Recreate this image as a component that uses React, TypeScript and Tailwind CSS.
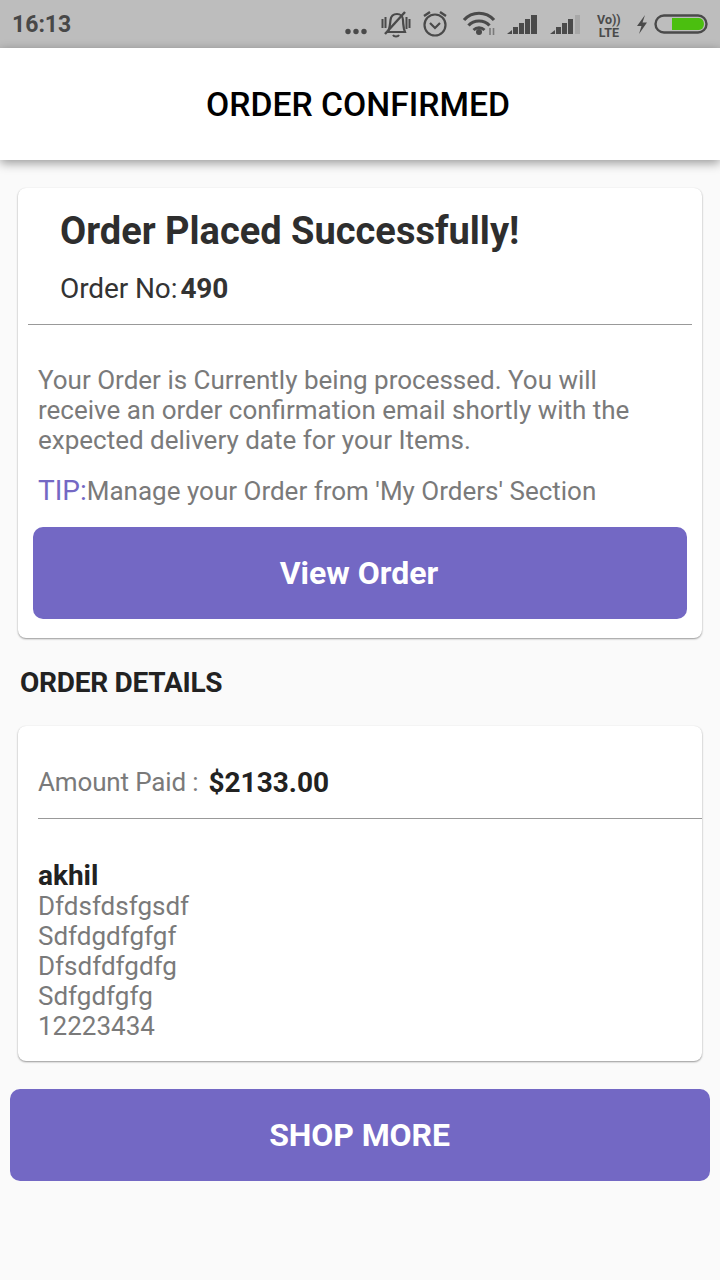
const font = "[font-family:Roboto,'Noto_Sans',sans-serif]";

function StatusIcons() {
  return (
    <div className="flex items-center">
      <svg width="366" height="48" viewBox="344 0 366 48" fill="none">
        {/* dots */}
        <circle cx="348" cy="31.5" r="2.7" fill="#4a4a4a" />
        <circle cx="356" cy="31.5" r="2.7" fill="#4a4a4a" />
        <circle cx="364" cy="31.5" r="2.7" fill="#4a4a4a" />
        {/* muted vibrate bell */}
        <path d="M389 29c1-3 1-5 1.500-9s3-6 6.500-6 6 2.500 6 6 .5 6 1 9l1 3h-17z" stroke="#4a4a4a" strokeWidth="2.200" />
        <path d="M393 35c1 2 5 2 6 0" stroke="#4a4a4a" strokeWidth="2" />
        <path d="M385 34L405 12" stroke="#4a4a4a" strokeWidth="2.400" />
        <path d="M382.500 19v9M385.500 17v11M406.500 17v12M409.500 19v9" stroke="#4a4a4a" strokeWidth="2" />
        {/* alarm */}
        <circle cx="435" cy="25" r="10.500" stroke="#4a4a4a" strokeWidth="2.200" />
        <path d="M430 23l5 5 5-5" stroke="#4a4a4a" strokeWidth="2.200" />
        <path d="M424 16l6-4M446 16l-6-4" stroke="#4a4a4a" strokeWidth="2.400" />
        {/* wifi */}
        <path d="M464 20c8-9 22-9 30 0" stroke="#4a4a4a" strokeWidth="3.200" />
        <path d="M468.500 25.500c5.500-6 15.500-6 21 0" stroke="#4a4a4a" strokeWidth="3.200" />
        <path d="M473.500 30c3-3 8-3 11 0" stroke="#4a4a4a" strokeWidth="2.800" />
        <circle cx="479" cy="32" r="3" fill="#4a4a4a" />
        <path d="M490 28v7M493.500 28v7" stroke="#7a7a7a" strokeWidth="1.600" />
        {/* signal 1 */}
        <path d="M507 34l5-4v4z" fill="#4a4a4a" />
        <rect x="513" y="27" width="5" height="7" fill="#4a4a4a" />
        <rect x="519" y="23" width="5" height="11" fill="#4a4a4a" />
        <rect x="525" y="19" width="5" height="15" fill="#4a4a4a" />
        <rect x="531" y="15" width="6" height="19" fill="#4a4a4a" />
        {/* signal 2 */}
        <path d="M550 34l5-4v4z" fill="#4a4a4a" />
        <rect x="556" y="27" width="5" height="7" fill="#4a4a4a" />
        <rect x="562" y="23" width="5" height="11" fill="#4a4a4a" />
        <rect x="568" y="19" width="5" height="15" fill="#4a4a4a" />
        <rect x="575" y="15" width="5" height="19" fill="#a8a8a8" />
        {/* charging bolt */}
        <path d="M645 15l-8 11h4.500l-2.500 8 8-11.500h-4.500z" fill="#4a4a4a" />
        {/* battery */}
        <rect x="655.500" y="15.500" width="51" height="17" rx="8.500" stroke="#4a4a4a" strokeWidth="2.400" />
        <path d="M672 18h27a5 6 0 0 1 5 6 5 6 0 0 1-5 6h-27z" fill="#4bbf0f" />
      </svg>
    </div>
  );
}

function Card({ className, children }: { className: string; children: React.ReactNode }) {
  return (
    <div className={`mx-[18px] rounded-lg bg-white shadow-[0_1px_2px_rgba(0,0,0,0.4),0_0_1px_rgba(0,0,0,0.06)] ${className}`}>
      {children}
    </div>
  );
}

export default function App() {
  return (
    <div className={`${font} flex h-[1280px] w-[720px] flex-col overflow-hidden bg-[#fafafa]`}>
      <div className="relative flex h-12 shrink-0 items-center bg-[#bdbdbd]">
        <span className="pl-3 pt-0.5 text-[23px] font-bold text-[#484848]">16:13</span>
        <div className="absolute right-[10px] top-0">
          <StatusIcons />
        </div>
        <div className="absolute left-[597px] top-[13px] flex flex-col items-center text-[#4a4a4a]">
          <span className="text-[12.5px] font-bold leading-[13px]">Vo))</span>
          <span className="text-[12.5px] font-bold leading-[13px]">LTE</span>
        </div>
      </div>

      <div className="z-10 flex h-28 shrink-0 items-center justify-center bg-white pr-1 pt-0.5 shadow-[0_3px_10px_rgba(0,0,0,0.4)]">
        <h1 className="text-[33.7px] font-medium text-black">ORDER CONFIRMED</h1>
      </div>

      <Card className="mt-7 h-[450px] px-[10px]">
        <div className="px-8 pt-[19px]">
          <h2 className="text-[38px] font-bold leading-[48px] text-[#2e2e2e]">Order Placed Successfully!</h2>
          <p className="mt-[14px] flex h-10 items-center gap-[3px] text-[28px] tracking-[-0.1px] text-[#333]">
            <span>Order No:</span>
            <span className="font-bold">490</span>
          </p>
        </div>
        <div className="mt-[15px] h-px bg-[#999]" />
        <p className="mx-[10px] mt-[40px] text-[26px] leading-[30px] text-[#7a7a7a]">
          Your Order is Currently being processed. You will receive an order confirmation email shortly with the expected delivery date for your Items.
        </p>
        <p className="mx-[10px] mt-[21px] text-[26px] leading-[30px] text-[#7a7a7a]">
          <span className="text-[28px] text-[#7468c4]">TIP:</span>Manage your Order from 'My Orders' Section
        </p>
        <button className="mx-[5px] mt-[21px] flex h-[92px] w-[654px] items-center justify-center rounded-[10px] bg-[#7368c4] pr-0.5 text-[32px] font-bold text-white">
          View Order
        </button>
      </Card>

      <h3 className="ml-5 mt-[27px] text-[28px] font-bold leading-9 tracking-[-0.25px] text-[#222]">ORDER DETAILS</h3>

      <Card className="mt-[25px] h-[335px]">
        <div className="flex items-center px-5 pt-[37px]">
          <span className="text-[26px] leading-9 tracking-[-0.15px] text-[#7a7a7a]">Amount Paid :</span>
          <span className="ml-[10px] pt-0.5 text-[28px] font-bold leading-9 text-[#222]">$2133.00</span>
        </div>
        <div className="ml-5 mt-[17px] h-px bg-[#999]" />
        <div className="mt-[42px] px-5 text-[26px] leading-[30px] text-[#7a7a7a]">
          <p className="text-[28px] font-bold text-[#222]">akhil</p>
          <p>Dfdsfdsfgsdf</p>
          <p>Sdfdgdfgfgf</p>
          <p>Dfsdfdfgdfg</p>
          <p>Sdfgdfgfg</p>
          <p>12223434</p>
        </div>
      </Card>

      <button className="mx-[10px] mt-7 flex h-[92px] items-center justify-center rounded-[10px] bg-[#7368c4] pr-px text-[32px] font-bold tracking-[-0.1px] text-white">
        SHOP MORE
      </button>
    </div>
  );
}
